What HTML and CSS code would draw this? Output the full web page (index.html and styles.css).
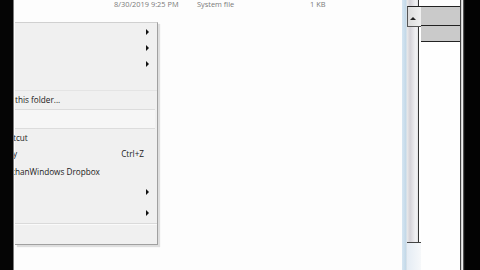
FILE: index.html
```html
<!DOCTYPE html>
<html>
<head>
<meta charset="utf-8">
<link rel="stylesheet" href="styles.css">
</head>
<body>
<div class="edge-left"></div>
<div class="main">
  <div class="file-row">
    <span class="c-date">8/30/2019 9:25 PM</span>
    <span class="c-type">System file</span>
    <span class="c-size">1 KB</span>
  </div>
  <div class="menu">
    <div class="item h16"><span class="lbl"></span><span class="arrow"></span></div>
    <div class="item h16"><span class="lbl"></span><span class="arrow"></span></div>
    <div class="item h15"><span class="lbl"></span><span class="arrow"></span></div>
    <div class="gap20"></div>
    <div class="item h16"><span class="lbl l-folder">this folder...</span></div>
    <div class="band"></div>
    <div class="item h16"><span class="lbl l-cut">tcut</span></div>
    <div class="item h16"><span class="lbl l-undo">y</span><span class="key">Ctrl+Z</span></div>
    <div class="gap4"></div>
    <div class="item h16"><span class="lbl l-drop">thanWindows Dropbox</span></div>
    <div class="gap5"></div>
    <div class="item h16"><span class="lbl"></span><span class="arrow"></span></div>
    <div class="gap5"></div>
    <div class="item h16"><span class="lbl"></span><span class="arrow"></span></div>
    <div class="sep"></div>
  </div>
</div>
<div class="scroll">
  <div class="scroll-top"><span class="tri"></span></div>
  <div class="scroll-track"></div>
  <div class="scroll-end"></div>
</div>
<div class="pane">
  <div class="pane-row"></div>
  <div class="pane-row r2"></div>
</div>
<div class="frame"></div>
<div class="edge-right"></div>
</body>
</html>
```

FILE: styles.css
```css
html, body {
  margin: 0;
  padding: 0;
}
body {
  width: 480px;
  height: 270px;
  overflow: hidden;
  display: flex;
  background: #fdfdfd;
  font-family: "Open Sans", "Noto Sans", sans-serif;
  font-size: 8.2px;
  color: #1a1a1a;
}
.edge-left {
  width: 13px;
  background: #050505;
  flex: none;
}
.main {
  width: 389px;
  flex: none;
  position: relative;
  overflow: hidden;
  border-left: 1px solid #7a7a7a;
  box-sizing: border-box;
  background: #fdfdfd;
}
.file-row {
  position: relative;
  height: 22px;
  color: #7a7a7a;
  font-size: 7.4px;
  line-height: 8px;
  white-space: nowrap;
}
.c-date { position: absolute; left: 100px; top: 0; }
.c-type { position: absolute; left: 183px; top: 0; }
.c-size { position: absolute; left: 296px; top: 0; }

.menu {
  position: absolute;
  left: 1px;
  top: 22px;
  width: 142px;
  height: 220px;
  background: #f0f0f0;
  border-top: 1px solid #d0d0d0;
  border-right: 1px solid #a0a0a0;
  border-bottom: 1px solid #a0a0a0;
  box-shadow: 2px 2px 1px rgba(0,0,0,0.12);
  padding-top: 1px;
  display: flex;
  flex-direction: column;
}
.item {
  display: flex;
  align-items: center;
  justify-content: space-between;
  padding-right: 7px;
  white-space: nowrap;
}
.h16 { height: 16px; }
.h15 { height: 15px; }
.gap20 { height: 20px; border-bottom: 1px solid #e4e4e4; box-sizing: border-box; }
.gap4 { height: 2px; }
.gap5 { height: 5px; }
.band {
  height: 20px;
  margin: 2px 2px 0 0;
  background: #f6f6f6;
  border-top: 1px solid #dcdcdc;
  border-bottom: 1px solid #dcdcdc;
  box-sizing: border-box;
}
.sep {
  height: 0;
  margin-top: 2px;
  border-top: 1px solid #dadada;
  border-bottom: 1px solid #fafafa;
}
.lbl { display: block; }
.l-folder { margin-left: 0; }
.l-cut { margin-left: -2px; }
.l-undo { margin-left: -2px; }
.l-drop { margin-left: -3px; }
.key { margin-right: 6px; }
.arrow {
  width: 0;
  height: 0;
  border-top: 3px solid transparent;
  border-bottom: 3px solid transparent;
  border-left: 3px solid #111;
  margin-right: 1px;
}

.scroll {
  width: 19px;
  flex: none;
  display: flex;
  flex-direction: column;
  background: linear-gradient(to right, #d6e6f2 0, #c2d8e8 4px, #e9e9ea 5px, #d4d2d8 8px, #f2f2f4 14px, #e2e2e4 16px, #333 16px, #333 17px, #fff 17px);
}
.scroll-top {
  height: 21px;
  margin-top: 6px;
  margin-left: 5px;
  border-top: 1px solid #222;
  border-left: 1px solid #555;
  border-bottom: 1px solid #555;
  box-sizing: border-box;
  position: relative;
  background: linear-gradient(to right, #dcdcdc, #f0f0f0);
}
.tri {
  position: absolute;
  left: 2px;
  top: 10px;
  width: 0;
  height: 0;
  border-left: 3px solid transparent;
  border-right: 3px solid transparent;
  border-bottom: 3px solid #222;
}
.scroll-track { flex: 1; }
.scroll-end {
  height: 27px;
  margin-left: 5px;
  border-top: 1px solid #444;
  background: linear-gradient(to right, #e4ecf4, #f6f8fa);
}

.pane {
  width: 39px;
  flex: none;
  background: #fefefe;
  padding-top: 6px;
  box-sizing: border-box;
}
.pane-row {
  height: 19px;
  background: #cacaca;
  border-top: 1px solid #222;
  box-sizing: border-box;
}
.pane-row.r2 {
  height: 17px;
  border-bottom: 1px solid #222;
}
.frame {
  width: 5px;
  flex: none;
  background: linear-gradient(to right, #444 0, #444 1px, #bbb 1px, #eee 2px, #eee 3px, #555 3px, #555 4px, #111 4px);
}
.edge-right {
  flex: 1;
  background: #030303;
}
```
